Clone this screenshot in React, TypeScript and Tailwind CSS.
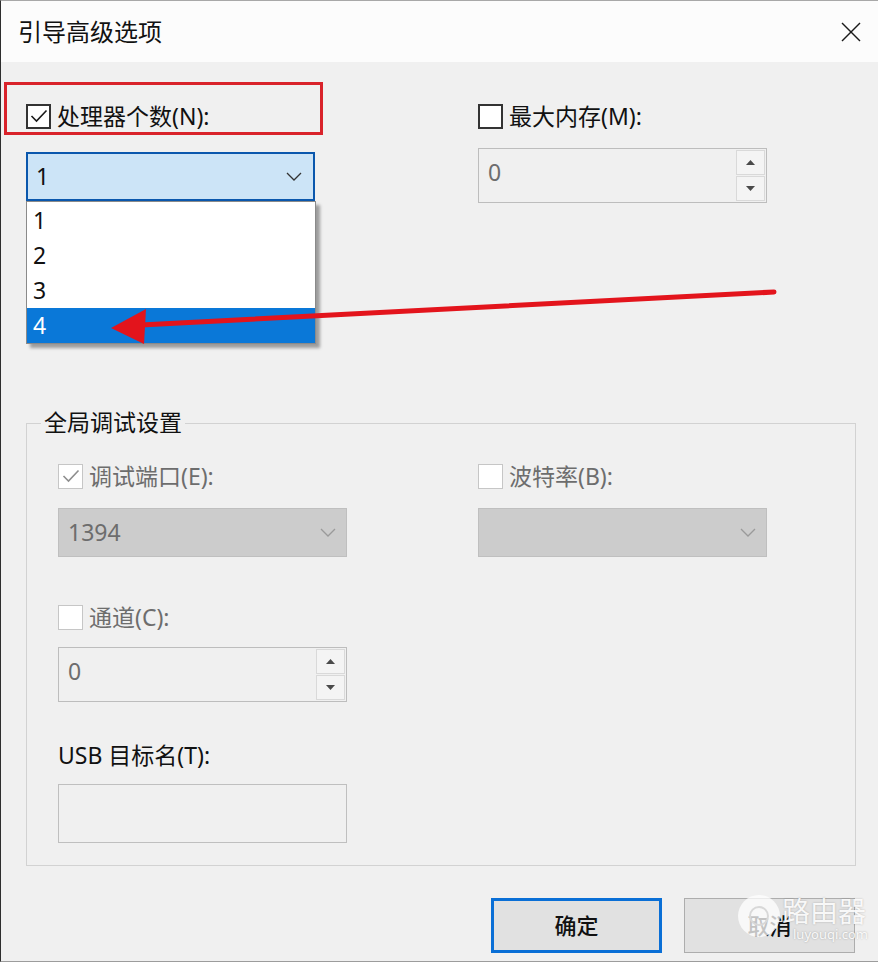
import React from "react";

function CheckBox({ checked, disabled }: { checked?: boolean; disabled?: boolean }) {
  return (
    <span
      className={`flex h-[25px] w-[25px] shrink-0 items-center justify-center bg-white ${
        disabled ? "border border-[#c6c6c6]" : "border-2 border-[#333333]"
      }`}
    >
      {checked && (
        <svg width="18" height="14" viewBox="0 0 18 14" fill="none">
          <polyline
            points="1.5,7 6.5,12 16.5,1.5"
            stroke={disabled ? "#8e8e8e" : "#1a1a1a"}
            strokeWidth="1.6"
          />
        </svg>
      )}
    </span>
  );
}

function Chevron({ color }: { color: string }) {
  return (
    <svg width="16" height="9" viewBox="0 0 16 9" fill="none">
      <polyline points="1,1 8,8 15,1" stroke={color} strokeWidth="1.3" />
    </svg>
  );
}

function CheckRow({
  label,
  checked,
  disabled,
}: {
  label: string;
  checked?: boolean;
  disabled?: boolean;
}) {
  return (
    <div className="flex items-center gap-[6px]">
      <CheckBox checked={checked} disabled={disabled} />
      <span
        className={`text-[23px] leading-[28px] ${disabled ? "text-[#6d6d6d]" : "text-[#111]"}`}
      >
        {label}
      </span>
    </div>
  );
}

function SpinBox() {
  return (
    <div className="flex h-[55px] w-[289px] border border-[#bdbdbd] bg-[#f0f0f0]">
      <span className="flex flex-1 items-center pb-[6px] pl-[9px] text-[23px] text-[#6d6d6d]">
        0
      </span>
      <div className="flex w-[31px] flex-col gap-[1px] p-[1px]">
        <span className="flex flex-1 items-center justify-center border border-[#d9d9d9] bg-[#f4f4f4]">
          <svg width="9" height="5" viewBox="0 0 9 5">
            <polygon points="0,5 4.5,0 9,5" fill="#4a4a4a" />
          </svg>
        </span>
        <span className="flex flex-1 items-center justify-center border border-[#d9d9d9] bg-[#f4f4f4]">
          <svg width="9" height="5" viewBox="0 0 9 5">
            <polygon points="0,0 4.5,5 9,0" fill="#4a4a4a" />
          </svg>
        </span>
      </div>
    </div>
  );
}

function DisabledCombo({ value }: { value: string }) {
  return (
    <div className="flex h-[49px] w-[289px] items-center justify-between border border-[#bfbfbf] bg-[#cccccc] pl-[9px] pr-[10px]">
      <span className="text-[23px] text-[#6d6d6d]">{value}</span>
      <Chevron color="#9a9a9a" />
    </div>
  );
}

export default function App() {
  const options = ["1", "2", "3", "4"];

  return (
    <div className="relative h-[962px] w-[878px] overflow-hidden border-l border-t border-b border-l-[#2e2e2e] border-t-[#a8a8a8] border-b-[#9c9c9c] bg-[#f0f0f0] font-['Noto_Sans','Noto_Sans_CJK_SC',sans-serif] text-[#111]">
      {/* Title bar */}
      <div className="flex h-[61px] items-center justify-between bg-[#fcfcfc] pl-[17px] pr-[17px]">
        <span className="text-[24px] leading-none text-[#111]">引导高级选项</span>
        <svg width="20" height="20" viewBox="0 0 20 20" fill="none">
          <line x1="1" y1="1" x2="19" y2="19" stroke="#1a1a1a" strokeWidth="1.4" />
          <line x1="19" y1="1" x2="1" y2="19" stroke="#1a1a1a" strokeWidth="1.4" />
        </svg>
      </div>

      {/* Top options */}
      <div className="flex pt-[20px]">
        <div className="ml-[3px] w-[319px]">
          <div className="flex h-[53px] w-[319px] items-start border-[3px] border-[#d9232b] pl-[19px] pt-[17px]">
            <CheckRow label="处理器个数(N):" checked />
          </div>
          <div className="relative ml-[22px] mt-[17px] w-[289px]">
            <div className="flex h-[49px] items-center justify-between border-2 border-[#0a57ad] bg-[#cce4f7] pl-[8px] pr-[11px]">
              <span className="text-[23px]">1</span>
              <Chevron color="#333" />
            </div>
            <ul className="absolute left-0 top-full z-10 w-[290px] border border-[#8a8a8a] bg-white pt-[1px] shadow-[4px_4px_3px_rgba(0,0,0,0.35)]">
              {options.map((o) => (
                <li
                  key={o}
                  className={`flex h-[35px] items-center pl-[6px] text-[23px] ${
                    o === "4" ? "bg-[#0a78d8] text-white" : "text-[#111]"
                  }`}
                >
                  {o}
                </li>
              ))}
            </ul>
          </div>
        </div>

        <div className="ml-[155px] pt-[20px]">
          <CheckRow label="最大内存(M):" />
          <div className="mt-[18px]">
            <SpinBox />
          </div>
        </div>
      </div>

      {/* Global debug settings */}
      <div className="ml-[25px] mt-[220px] flex h-[443px] w-[830px] flex-col border border-[#d2d2d2]">
        <span className="-mt-[16px] ml-[14px] w-fit bg-[#f0f0f0] px-[3px] text-[23px] leading-[28px] text-[#111]">
          全局调试设置
        </span>

        <div className="mt-[26px] flex pl-[31px]">
          <div className="w-[289px]">
            <CheckRow label="调试端口(E):" checked disabled />
            <div className="mt-[18px]">
              <DisabledCombo value="1394" />
            </div>
          </div>
          <div className="ml-[131px] w-[289px]">
            <CheckRow label="波特率(B):" disabled />
            <div className="mt-[18px]">
              <DisabledCombo value="" />
            </div>
          </div>
        </div>

        <div className="mt-[46px] pl-[31px]">
          <CheckRow label="通道(C):" disabled />
          <div className="mt-[16px]">
            <SpinBox />
          </div>
        </div>

        <div className="mt-[39px] pl-[31px]">
          <span className="text-[23px] leading-[28px] text-[#111]">USB 目标名(T):</span>
          <div className="mt-[14px] h-[59px] w-[289px] border border-[#bfbfbf] bg-[#f0f0f0]" />
        </div>
      </div>

      {/* Buttons */}
      <div className="mt-[32px] flex justify-end gap-[22px] pr-[23px]">
        <button className="flex h-[55px] w-[171px] items-center justify-center border-[3px] border-[#0a6fd6] bg-[#e1e1e1] text-[22px] font-medium text-[#111]">
          确定
        </button>
        <button className="flex h-[55px] w-[171px] items-center justify-center border border-[#adadad] bg-[#e1e1e1] text-[22px] font-medium text-[#111]">
          取消
        </button>
      </div>

      {/* Red annotation arrow */}
      <svg
        className="pointer-events-none absolute left-0 top-0 z-20"
        width="878"
        height="962"
        viewBox="0 0 878 962"
      >
        <line x1="773" y1="291" x2="140" y2="324" stroke="#e3141c" strokeWidth="5" strokeLinecap="round" />
        <polygon points="110,327 145,308 143,343" fill="#e3141c" />
      </svg>

      {/* Watermark */}
      <div className="pointer-events-none absolute left-[737px] top-[894px] z-20 flex h-[42px] w-[42px] items-center justify-center rounded-full bg-white/75">
        <span className="h-[20px] w-[20px] rounded-full border-2 border-[#d8d8d8]" />
      </div>
      <span className="pointer-events-none absolute left-[781px] top-[893px] z-20 text-[28px] leading-[34px] text-white/90 [text-shadow:0_0_2px_rgba(0,0,0,0.25)]">
        路由器
      </span>
      <span className="pointer-events-none absolute left-[792px] top-[924px] z-20 text-[13px] leading-[18px] text-white/90 [text-shadow:0_0_2px_rgba(0,0,0,0.3)]">
        luyouqi.com
      </span>
    </div>
  );
}
